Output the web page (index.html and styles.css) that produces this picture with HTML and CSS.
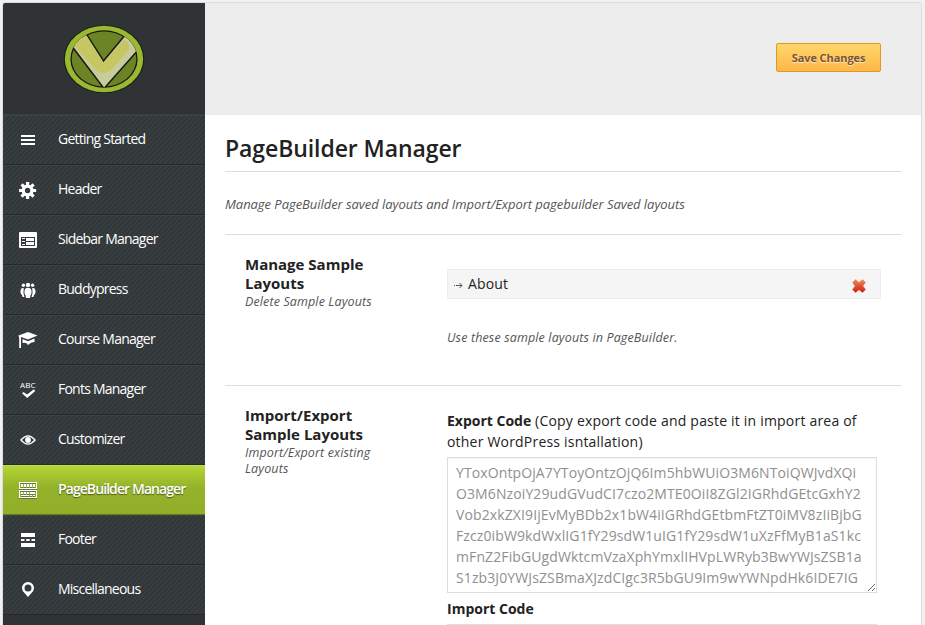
FILE: index.html
```html
<!DOCTYPE html>
<html lang="en">
<head>
<meta charset="utf-8">
<title>PageBuilder Manager</title>
<link rel="stylesheet" href="styles.css">
</head>
<body>
<div class="panel">
  <aside class="sidebar">
    <div class="brand">
      <svg width="82" height="70" viewBox="0 0 82 70">
        <defs><clipPath id="disc"><ellipse cx="41" cy="35" rx="33.3" ry="28.5"/></clipPath></defs>
        <ellipse cx="41" cy="35" rx="40.300" ry="34.300" fill="#1d2113"/>
        <ellipse cx="41" cy="35" rx="39.200" ry="33.200" fill="#9ab832"/>
        <ellipse cx="41" cy="35" rx="33.600" ry="28.800" fill="#171a12"/>
        <ellipse cx="41" cy="35" rx="32.300" ry="27.600" fill="#6c8425"/>
        <g clip-path="url(#disc)">
          <path d="M8 21L22 8L40.500 37L63 10L76 25L41 64.500Z" fill="#c8cc9c" stroke="#171a12" stroke-width="1.500"/>
          <path d="M11 21L23.500 11.500L40.500 38.500L60.500 16C66 16 67 22 65 27L51 43Q41 54 32 45L15 26Z" fill="#c6c762"/>
        </g>
      </svg>
    </div>
    <nav class="menu">
      <a class="item"><svg class="icon" viewBox="0 0 20 20"><path d="M3 5h14v2H3zM3 9h14v2H3zM3 13h14v2H3z"/></svg><span>Getting Started</span></a>
      <a class="item"><svg class="icon" viewBox="0 0 20 20"><g transform="translate(9.600 10.500)"><path fill-rule="evenodd" d="M-6 0a6 6 0 1 0 12 0a6 6 0 1 0-12 0M-2.700 0a2.700 2.700 0 1 1 5.400 0a2.700 2.700 0 1 1-5.400 0"/><path id="tooth" d="M-1.600-8.500h3.200v3.500h-3.200zM-1.600 5h3.200v3.500h-3.200zM-8.500-1.600h3.500v3.200h-3.500zM5-1.600h3.500v3.200H5z"/><use href="#tooth" transform="rotate(45)"/></g></svg><span>Header</span></a>
      <a class="item"><svg class="icon" viewBox="0 0 20 20"><path fill-rule="evenodd" d="M2 2h16q1 0 1 1v14q0 1-1 1H2q-1 0-1-1V3q0-1 1-1M3 7v9h14V7z"/><path d="M4 8h3v1H4zM4 11h3v1H4zM4 14h3v1H4zM8 8h8v3H8zM8 12h8v3H8z"/></svg><span>Sidebar Manager</span></a>
      <a class="item"><svg class="icon" viewBox="0 0 20 20"><circle cx="10" cy="4.900" r="2.200"/><circle cx="5.400" cy="5.300" r="1.700"/><circle cx="14.600" cy="5.300" r="1.700"/><path d="M7 9q3-2.500 6 0q1.400 4-.6 6.500L12 18H8l-.4-2.500Q5.600 13 7 9M5.800 8Q3 7.500 2.600 10q-.5 4 1.400 5l.5 2H6.500Q4.800 12.500 5.800 8M14.200 8q2.800-.5 3.200 2q.5 4-1.400 5l-.5 2h-2q1.700-4.500.7-9"/></svg><span>Buddypress</span></a>
      <a class="item"><svg class="icon" viewBox="0 0 20 20"><path d="M10 2L19.500 5.500L10 9.500L3 7V18H1.200V8L.500 5.500z"/><path d="M4.500 9L10 11.200L16.500 8.500V12L13.500 12.500L10 15Q8.500 12 4.500 13z"/></svg><span>Course Manager</span></a>
      <a class="item"><svg class="icon" viewBox="0 0 20 20"><text class="abc" x="2" y="8" textLength="15.500" lengthAdjust="spacingAndGlyphs">ABC</text><path d="M4 13.300L5.500 12L9 14.600L16 9.300L17.200 10.900L9.200 18z"/></svg><span>Fonts Manager</span></a>
      <a class="item"><svg class="icon" viewBox="0 0 20 20"><path fill-rule="evenodd" d="M2 10Q10 .500 18 10Q10 19.500 2 10M3.900 10Q10 17 16.100 10Q10 3 3.900 10"/><circle cx="10" cy="10" r="2.900"/></svg><span>Customizer</span></a>
      <a class="item active"><svg class="icon" viewBox="0 0 20 20"><path fill-rule="evenodd" d="M1 2h18v7H1zM2 3v5h16V3zM1 10h18v8H1zM2 11v6h16v-6z"/><path d="M3 4h2v3H3zM6 4h2v3H6zM9 4h2v3H9zM12 4h2v3h-2zM15 4h2v3h-2zM3 12h2v2H3zM6 12h2v2H6zM9 12h2v2H9zM12 12h5v2h-5zM3 15h8v1H3zM12 15h2v1h-2zM15 15h2v1h-2z"/></svg><span>PageBuilder Manager</span></a>
      <a class="item"><svg class="icon" viewBox="0 0 20 20"><path d="M3 3h14v4H3zM3 9h3.500v2H3zM8.200 9h3.500v2H8.200zM13.500 9H17v2h-3.500zM3 13h14v4H3z"/></svg><span>Footer</span></a>
      <a class="item"><svg class="icon" viewBox="0 0 20 20"><path fill-rule="evenodd" d="M10 2a6 6 0 0 1 6 6q0 2.500-2.500 5L10 17L6.500 13Q4 10.500 4 8a6 6 0 0 1 6-6M10 4.500a3.500 3.500 0 1 0 0 7a3.500 3.500 0 1 0 0-7"/></svg><span>Miscellaneous</span></a>
    </nav>
  </aside>
  <main class="main">
    <header class="topbar"><button class="save">Save Changes</button></header>
    <div class="content">
      <h1>PageBuilder Manager</h1>
      <p class="intro">Manage PageBuilder saved layouts and Import/Export pagebuilder Saved layouts</p>
      <section class="row first">
        <div class="label"><h2>Manage Sample<br>Layouts</h2><p>Delete Sample Layouts</p></div>
        <div class="field">
          <div class="layout-item">
            <svg class="arrow" width="10" height="9" viewBox="0 0 10 9"><path d="M0 4.500h1M2 4.500h6M5.500 2L8 4.500L5.500 7" fill="none" stroke="#555"/></svg>
            <span>About</span>
            <svg class="remove" width="14" height="14" viewBox="0 0 14 14"><defs><linearGradient id="red" x2="0" y2="1"><stop stop-color="#f08a50"/><stop offset="1" stop-color="#c92218"/></linearGradient></defs><path d="M3.500.5L7 3.500L10.500.5L13.500 3.500L10.800 7L13.500 10.500L10.500 13.500L7 10.700L3.500 13.500L.5 10.500L3.200 7L.5 3.500z" fill="url(#red)" stroke="url(#red)" stroke-width=".5" stroke-linejoin="round"/></svg>
          </div>
          <p class="hint">Use these sample layouts in PageBuilder.</p>
        </div>
      </section>
      <section class="row second">
        <div class="label"><h2>Import/Export<br>Sample Layouts</h2><p>Import/Export existing<br>Layouts</p></div>
        <div class="field">
          <p class="desc"><b>Export Code</b> (Copy export code and paste it in import area of<br>other WordPress isntallation)</p>
          <textarea class="code" spellcheck="false">YToxOntpOjA7YToyOntzOjQ6Im5hbWUiO3M6NToiQWJvdXQi
O3M6NzoiY29udGVudCI7czo2MTE0OiI8ZGl2IGRhdGEtcGxhY2
Vob2xkZXI9IjEvMyBDb2x1bW4iIGRhdGEtbmFtZT0iMV8zIiBjbG
Fzcz0ibW9kdWxlIG1fY29sdW1uIG1fY29sdW1uXzFfMyB1aS1kc
mFnZ2FibGUgdWktcmVzaXphYmxlIHVpLWRyb3BwYWJsZSB1a
S1zb3J0YWJsZSBmaXJzdCIgc3R5bGU9Im9wYWNpdHk6IDE7IG</textarea>
          <p class="desc"><b>Import Code</b></p>
          <textarea class="code import" spellcheck="false"></textarea>
        </div>
      </section>
    </div>
  </main>
</div>
</body>
</html>
```
FILE: styles.css
```css
* { box-sizing: border-box; }
html, body { height: 100%; overflow: hidden; }
body {
  margin: 0;
  padding: 2px 3px 0 2px;
  background: #f1f1f1;
  color: #222;
  font-family: "Open Sans", sans-serif;
  font-size: 14px;
}
h1, h2, p { margin: 0; }
.panel {
  display: flex;
  height: 623px;
  border: 1px solid #dcdcdc;
  border-bottom: 0;
  border-radius: 3px 3px 0 0;
  background: #fff;
  overflow: hidden;
}
.sidebar { width: 202px; flex: none; background: #2f3335; }
.brand {
  height: 112px;
  border-bottom: 1px solid #393e41;
  display: flex;
  justify-content: center;
  padding-top: 21px;
}
.item {
  display: flex;
  align-items: center;
  height: 50px;
  padding-left: 15px;
  border-top: 1px solid #3d4245;
  border-bottom: 1px solid #25292b;
  background: repeating-linear-gradient(135deg, #303537 0 1.414px, #383d3f 1.414px 3.536px);
  color: #fff;
  letter-spacing: -.77px;
}
.item span { padding-bottom: 3px; }
.icon { width: 20px; height: 20px; margin-right: 20px; fill: #fff; flex: none; }
.abc { font: 8px "Open Sans", sans-serif; letter-spacing: 0; }
.active {
  background: linear-gradient(#b4d535, #94b22a 45%, #92ae29);
  border-top-color: #c2e04a;
  border-bottom-color: #66791d;
  font-weight: 600;
  letter-spacing: -.92px;
  text-shadow: 0 1px 1px rgba(0, 0, 0, .5);
}
.active .icon { filter: drop-shadow(0 1px 0 rgba(80, 90, 80, .7)); }
.main { flex: 1; min-width: 0; }
.topbar {
  height: 112px;
  background: #ededed;
  display: flex;
  justify-content: flex-end;
  padding: 40px 40px 0 0;
}
.save {
  width: 105px;
  height: 29px;
  padding: 0;
  border: 1px solid #e0991f;
  border-radius: 2px;
  background: linear-gradient(#ffd76b, #ffb748);
  color: #7a5230;
  font: bold 11px "Open Sans", sans-serif;
  letter-spacing: -.08px;
  text-shadow: 0 1px 1px rgba(255, 255, 255, .75);
}
.content { padding: 0 20px; }
h1 {
  height: 57px;
  padding-top: 16px;
  border-bottom: 1px solid #ddd;
  font-size: 23px;
  line-height: 34px;
  font-weight: 600;
  letter-spacing: -.08px;
}
.intro {
  height: 63px;
  padding-top: 22px;
  border-bottom: 1px solid #ddd;
  font-size: 13px;
  line-height: 20px;
  font-style: italic;
  letter-spacing: -.05px;
  color: #555;
}
.row { display: flex; padding-left: 20px; }
.first { height: 151px; border-bottom: 1px solid #ddd; }
.label { width: 202px; padding-top: 20px; flex: none; }
h2 { font-size: 15px; line-height: 19px; font-weight: 700; }
.label p {
  padding-top: 1px;
  font-size: 12.5px;
  line-height: 16px;
  font-style: italic;
  letter-spacing: .12px;
  color: #555;
}
.field { width: 434px; }
.layout-item {
  display: flex;
  align-items: center;
  height: 30px;
  margin-top: 34px;
  padding: 0 14px 0 6px;
  border: 1px solid #ececec;
  background: #f5f5f5;
}
.layout-item span { padding-bottom: 2px; letter-spacing: .15px; }
.arrow { margin: 3px 4px 0 0; }
.remove { margin: 4px 0 0 auto; }
.hint {
  margin-top: 29px;
  font-size: 12.5px;
  line-height: 20px;
  font-style: italic;
  letter-spacing: .14px;
  color: #555;
}
.desc { line-height: 21px; letter-spacing: .2px; }
.desc b { letter-spacing: 0; }
.second .field { padding-top: 24px; }
.code {
  display: block;
  width: 430px;
  height: 136px;
  margin: 5px 0;
  padding: 4px 8px;
  border: 1px solid #ddd;
  box-shadow: inset 0 1px 1px rgba(0, 0, 0, .04);
  outline: none;
  overflow: hidden;
  white-space: pre;
  resize: both;
  background: #fff;
  color: #909090;
  font: 14px/21px "Open Sans", sans-serif;
  letter-spacing: .11px;
}
.import { height: 7px; }
```
